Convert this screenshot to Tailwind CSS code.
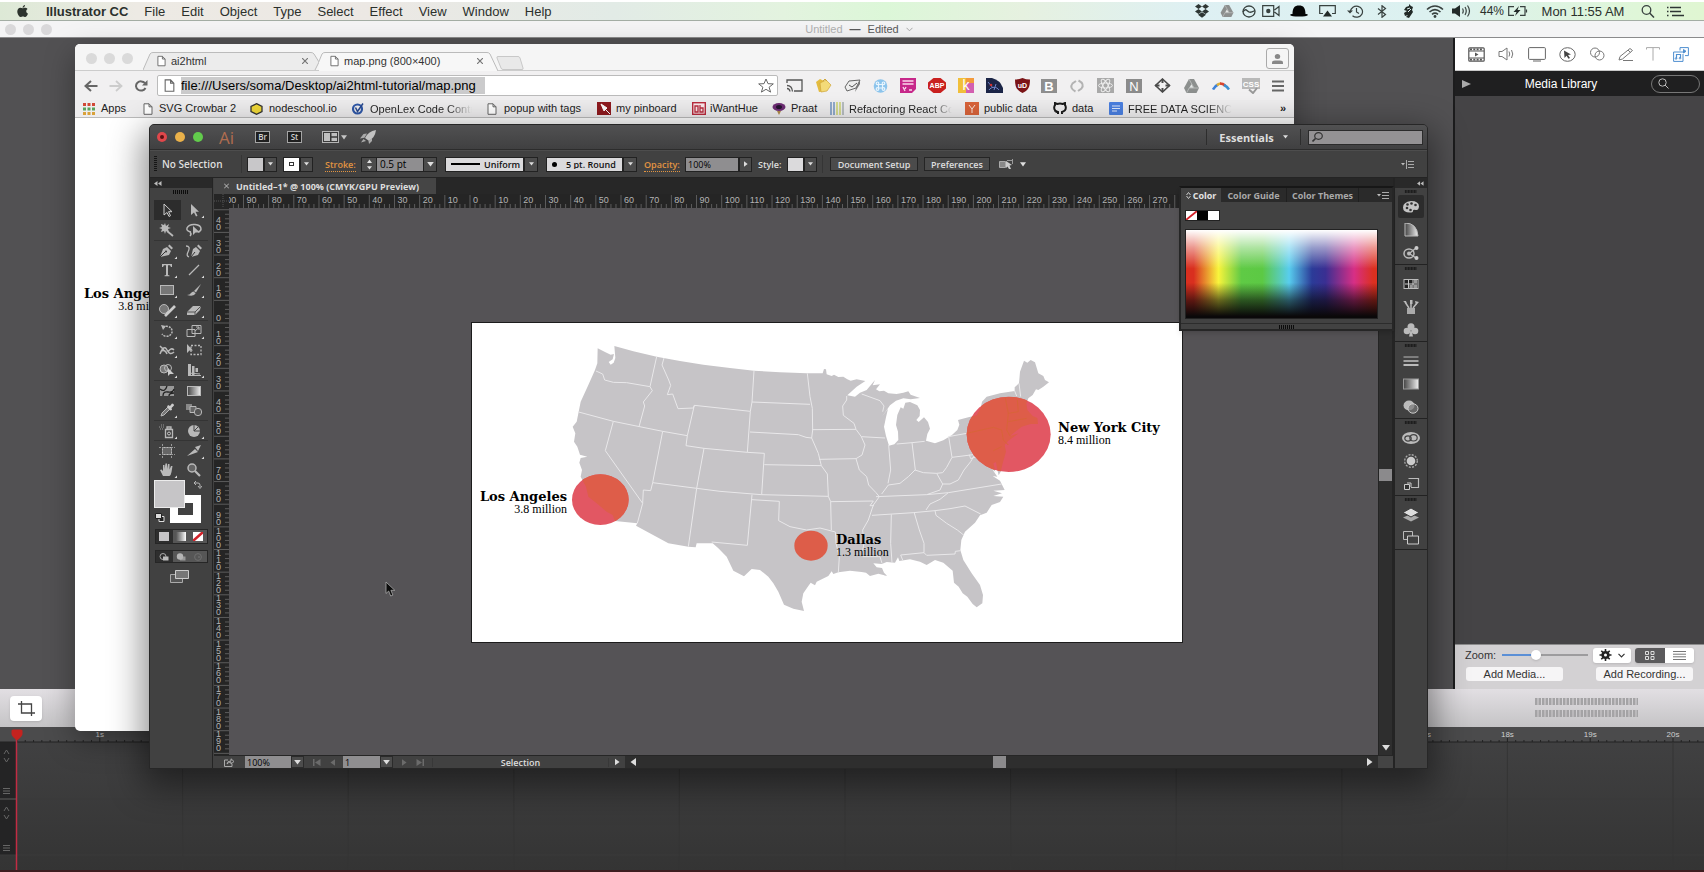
<!DOCTYPE html>
<html lang="en">
<head>
<meta charset="utf-8">
<title>Illustrator CC</title>
<script src="https://cdn.jsdelivr.net/npm/@tailwindcss/browser@4"></script>
</head>
<body class="font-['Liberation_Sans',Arial,sans-serif] bg-[#3e3e3e]">

<!-- shared symbols -->
<svg class="hidden" aria-hidden="true">
  <symbol id="down" viewBox="0 0 8 6"><path d="M0 0h8L4 5.5z" fill="currentColor"/></symbol>
  <symbol id="right" viewBox="0 0 6 8"><path d="M0 0v8l5.5-4z" fill="currentColor"/></symbol>
  <symbol id="left" viewBox="0 0 6 8"><path d="M6 0v8L.5 4z" fill="currentColor"/></symbol>
  <symbol id="page" viewBox="0 0 10 12"><path d="M1 .8h5l3 3v7.5H1zM6 .8v3h3" fill="#fff" stroke="#666" stroke-width="1"/></symbol>
  <symbol id="grip" viewBox="0 0 18 4"><path d="M1.500 0v4M3.500 0v4M5.500 0v4M7.500 0v4M9.500 0v4M11.500 0v4M13.500 0v4M15.500 0v4" stroke="#0c0c0c"/></symbol>
  <symbol id="collapse" viewBox="0 0 8 5"><path d="M3.500 0v5L0 2.500zM7.500 0v5L4 2.500z" fill="#bbb"/></symbol>
  <symbol id="drive" viewBox="0 0 16 14"><path d="M5.500 0h5l5 9-2.500 5H3L.5 9z" fill="#8c8f8e"/><path d="M8 5l2.300 4H5.700z" fill="#e3e6e5"/><path d="M5.500 0l5 9M15.500 9H5.700L3 14" stroke="#b5b8b7" fill="none"/></symbol>
</svg>

<div class="relative h-screen min-h-[600px] overflow-hidden flex flex-col">

  <!-- system menu bar -->
  <header class="h-[21px] shrink-0 pt-[2px] bg-white">
    <div class="h-[19px] flex items-center border-b border-[#a3ada4] text-[13px] leading-none text-[#2b302c] bg-[linear-gradient(90deg,#dde9d6_0%,#edeae4_8%,#ece8e4_22%,#e2ebe6_36%,#e3f3df_46%,#dcf7d8_52%,#e6f1e0_60%,#def0f3_70%,#dcf1f0_84%,#dff6d8_96%,#e0f6d2_100%)]">
      <nav class="flex flex-1 items-center gap-[16px] pl-[16px]" aria-label="Application menu">
        <button aria-label="Apple menu" class="w-[14px]"><svg class="w-[13px] h-[12px]" viewBox="0 0 13 12"><path d="M9 0c.1 1.300-1 2.600-2.400 2.700C6.500 1.400 7.700.2 9 0zM6.700 3.300c.6 0 1.300-.6 2.400-.6 1 0 1.900.4 2.500 1.200-2 1.200-1.700 3.700.4 4.500C11.300 10.400 10.300 12 9.200 12c-.9 0-1.200-.5-2.300-.5s-1.500.5-2.300.5C3 12 1.300 9 1.300 6.600c0-2.500 1.500-3.800 3-3.800 1 0 1.800.5 2.400.5z" fill="#2c332d"/></svg></button>
        <button class="font-bold">Illustrator CC</button>
        <button>File</button><button>Edit</button><button>Object</button><button>Type</button><button>Select</button><button>Effect</button><button>View</button><button>Window</button><button>Help</button>
      </nav>
      <div class="flex items-center h-full pr-[12px]">
        <span class="w-[26px] flex justify-center"><svg class="w-[16px] h-[14px]" viewBox="0 0 16 14"><path d="M4.500 0L8 2.500 4.500 5 1 2.500zM11.500 0L15 2.500 11.500 5 8 2.500zM4.500 5L8 7.500 4.500 10 1 7.500zM11.500 5L15 7.500 11.500 10 8 7.500zM4 10.800L8 8.300l4 2.500-4 3z" fill="#2e3634"/></svg></span>
        <span class="w-[23px] flex justify-center"><svg class="w-[14px] h-[12px]"><use href="#drive"/></svg></span>
        <span class="w-[21px] flex justify-center"><svg class="w-[14px] h-[13px]" viewBox="0 0 14 13"><ellipse cx="7" cy="6.500" rx="6" ry="5.500" fill="none" stroke="#38413f" stroke-width="1.300"/><path d="M1 7c2.500-4.500 4-1 6 0s4-.5 6-1.500" fill="none" stroke="#38413f" stroke-width="1.300"/></svg></span>
        <span class="w-[24px] flex justify-center"><svg class="w-[18px] h-[12px]" viewBox="0 0 18 12"><path d="M.7.7h11v10.600H.7zM12.500 5l4.500-3.500v9L12.500 7" fill="none" stroke="#38413f" stroke-width="1.200"/><circle cx="6.300" cy="6" r="2.200" fill="#38413f"/></svg></span>
        <span class="w-[31px] flex justify-center"><svg class="w-[18px] h-[12px]" viewBox="0 0 18 12"><path d="M2.500 9C2.500 3 4.500.5 9 .5S15.500 3 15.500 9c1.300 0 2.200.3 2.500 1-1 1-4 1.500-9 1.500S1 11 0 10c.5-.7 1.200-1 2.500-1z" fill="#050707"/></svg></span>
        <span class="w-[27px] flex justify-center"><svg class="w-[17px] h-[12px]" viewBox="0 0 17 12"><path d="M4 8.500H.700V.7h15.600v7.800H13" fill="none" stroke="#38413f" stroke-width="1.200"/><path d="M8.500 5.500L13 11.500H4z" fill="#222a28"/></svg></span>
        <span class="w-[29px] flex justify-center"><svg class="w-[17px] h-[13px]" viewBox="0 0 17 13"><path d="M3.500 6.500A6 5.500 0 1 1 5.500 10.800M9.500 3v4l2.500 1.500" fill="none" stroke="#38413f" stroke-width="1.200"/><path d="M0 5.500h6L3 8.500z" fill="#38413f"/></svg></span>
        <span class="w-[23px] flex justify-center"><svg class="w-[10px] h-[13px]" viewBox="0 0 10 13"><path d="M1 3.500l7.500 6L5 12.300V.7l3.500 2.800L1 9.500" fill="none" stroke="#38413f" stroke-width="1.200"/></svg></span>
        <span class="w-[30px] flex justify-center"><svg class="w-[11px] h-[14px]" viewBox="0 0 11 14"><path d="M6 0l2 2 2 1-1 3 1 2-2 3-2 3-3-1 2-2-3 1-1-3 3-2-3-1 2-3 3-1z" fill="#222a28"/><path d="M5 8l3-3M4 5l3-1" stroke="#dbeceb"/></svg></span>
        <span class="w-[23px] flex justify-center"><svg class="w-[18px] h-[13px]" viewBox="0 0 18 13"><path d="M1 4.500c5-4.500 11-4.500 16 0M3.500 7c3.500-3 7.500-3 11 0M6 9.300c2-1.600 4-1.600 6 0" fill="none" stroke="#38413f" stroke-width="1.600"/><circle cx="9" cy="11.500" r="1.400" fill="#38413f"/></svg></span>
        <span class="w-[31px] flex justify-center"><svg class="w-[19px] h-[12px]" viewBox="0 0 19 12"><path d="M0 3.500h3L8 0v12L3 8.500H0z" fill="#222a28"/><path d="M10.500 3.500q1.500 2.500 0 5M13 2q2.500 4 0 8M15.500.5q4 5.500 0 11" fill="none" stroke="#38413f" stroke-width="1.200"/></svg></span>
        <span class="w-[30px] text-center text-xs leading-none">44%</span>
        <span class="w-[22px] flex justify-center"><svg class="w-[20px] h-[10px]" viewBox="0 0 20 10"><path d="M6 .7H.700v8.600H6M12 .7h5v8.600h-5M18.500 3.500v3" fill="none" stroke="#38413f" stroke-width="1.200"/><path d="M11 0L5.500 6h3L7 10l5.500-6h-3z" fill="#222a28"/></svg></span>
        <time class="w-[108px] text-center">Mon 11:55 AM</time>
        <button aria-label="Spotlight" class="w-[22px] flex justify-center"><svg class="w-[14px] h-[13px]" viewBox="0 0 14 13"><circle cx="5.500" cy="5" r="4.300" fill="none" stroke="#38413f" stroke-width="1.300"/><path d="M8.600 8l4.400 4.500" stroke="#38413f" stroke-width="1.500"/></svg></button>
        <button aria-label="Notifications" class="w-[33px] flex justify-center"><svg class="w-[17px] h-[11px]" viewBox="0 0 17 11"><path d="M0 1.500h1.500M0 5.500h1.500M0 9.500h1.500M3 1.500h11M3 5.500h11M5 9.500h12" stroke="#2e3634" stroke-width="1.500"/></svg></button>
      </div>
    </div>
  </header>

  <!-- recorder window title -->
  <div class="h-[17px] shrink-0 flex items-center bg-[#f4f4f5] border-b border-[#8b8b8c] text-[11px] leading-none">
    <div class="flex gap-[7px] pl-[5px]"><i class="w-[11px] h-[11px] rounded-full bg-[#d9d8da]"></i><i class="w-[11px] h-[11px] rounded-full bg-[#d9d8da]"></i><i class="w-[11px] h-[11px] rounded-full bg-[#d9d8da]"></i></div>
    <div class="flex-1 flex justify-center items-center gap-[7px] pr-[38px] text-[#5a5a5b]"><span class="text-[#b0b0b1]">Untitled</span><span class="font-bold">—</span><span>Edited</span><svg class="w-[7px] h-[5px]" viewBox="0 0 7 5"><path d="M.5.8l3 3 3-3" fill="none" stroke="#aaa"/></svg></div>
  </div>

  <!-- recorder main area -->
  <div class="flex-1 min-h-0 flex">
    <div class="flex-1 bg-[#525153] border-r-2 border-[#1c1c1d]"></div>
    <aside class="w-[249px] shrink-0 flex flex-col bg-[#454446]">
      <div class="h-[33px] shrink-0 bg-white border-b border-[#c8c8c8] flex items-center justify-between pl-[13px] pr-[15px] text-[#6e6e6e]">
        <button aria-label="Video"><svg class="w-[17px] h-[15px]" viewBox="0 0 17 15" fill="none" stroke="#555" stroke-width="1.200"><rect x=".8" y=".8" width="15.400" height="13.400" rx="1"/><path d="M1 4h15M1 11h15"/><path d="M2 2.400h13M2 12.600h13" stroke-width="1.800" stroke-dasharray="2 1.300"/><path d="M7 5.500v4l3.500-2z" fill="#555" stroke="none"/></svg></button>
        <button aria-label="Audio"><svg class="w-[18px] h-[14px]" viewBox="0 0 18 14" fill="none" stroke="#777"><path d="M1 4.500h3L9 1v12L4 9.500H1zM11 4.500q1.500 2.500 0 5M13.500 3q2.500 4 0 8"/></svg></button>
        <button aria-label="Screen"><svg class="w-[18px] h-[15px]" viewBox="0 0 18 15" fill="none" stroke="#666"><rect x=".6" y=".6" width="16.800" height="11.800" rx="1"/><path d="M5 14h8"/></svg></button>
        <button aria-label="Callout"><svg class="w-[17px] h-[15px]" viewBox="0 0 17 15"><ellipse cx="8.500" cy="7.500" rx="7.700" ry="6.800" fill="none" stroke="#666"/><path d="M5 3.500l7 4-3 .5 2 3-1.500.8-2-3L5.500 11z" fill="#444"/></svg></button>
        <button aria-label="Touch"><svg class="w-[16px] h-[14px]" viewBox="0 0 16 14" fill="none" stroke="#777"><ellipse cx="6" cy="5.500" rx="4.500" ry="4.500"/><ellipse cx="10.500" cy="8.500" rx="4.500" ry="4.500"/></svg></button>
        <button aria-label="Annotate"><svg class="w-[16px] h-[15px]" viewBox="0 0 16 15" fill="none" stroke="#777"><path d="M2 9.500L12 1.500l2.500 2-10 8.500L1 13zM5 13.500h10M10 3l2.500 2.500"/></svg></button>
        <button aria-label="Text"><svg class="w-[14px] h-[14px]" viewBox="0 0 14 14" fill="none" stroke="#aaa"><path d="M.5 2.500V.6h13v1.900M7 .6v13"/></svg></button>
        <button aria-label="Media"><svg class="w-[16px] h-[15px]" viewBox="0 0 16 15" fill="none" stroke="#4f8fd0"><path d="M7 3.500V.6h8.400v8H12M11 5H.6v9.400H10V7"/><path d="M10.500 2.500v3.500l2.500-1.700z" fill="#4f8fd0"/><path d="M3.500 11.500v-4h4v3.500" stroke-width="1.200"/><circle cx="3" cy="11.500" r=".8"/><circle cx="7" cy="11.200" r=".8"/></svg></button>
      </div>
      <div class="h-[25px] shrink-0 bg-[#1f1f20] flex items-center pl-[7px] pr-1 text-white">
        <button aria-label="Play" class="text-[#aaa]"><svg class="w-[9px] h-[8px]" viewBox="0 0 9 8"><path d="M0 0v8l9-4z" fill="currentColor"/></svg></button>
        <h2 class="flex-1 text-center text-[12px]">Media Library</h2>
        <label class="w-[49px] h-[18px] border border-[#777] rounded-full flex items-center pl-[6px]"><svg class="w-[11px] h-[11px] shrink-0" viewBox="0 0 11 11"><circle cx="4.500" cy="4.500" r="3.700" fill="none" stroke="#bbb"/><path d="M7 7l3.500 3.500" stroke="#bbb"/></svg><input aria-label="Search media" class="w-6 min-w-0 outline-none bg-transparent"></label>
      </div>
      <div class="flex-1"></div>
      <div class="h-[45px] shrink-0 bg-[#d3d1d3] border-t border-[#8c8c8c] px-[10px] pt-[2px] text-[11px] leading-none text-[#333]">
        <div class="flex items-center h-[16px]">
          <label for="zoom" class="w-[37px]">Zoom:</label>
          <div class="relative flex items-center w-[86px] h-4">
            <input id="zoom" type="range" min="0" max="100" value="38" class="absolute inset-0 w-full opacity-0">
            <div class="w-[33px] h-[2px] bg-[#5b8fd6]"></div><div class="flex-1 h-[2px] bg-[#9d9c9e]"></div>
            <i class="absolute left-[29px] top-[3px] w-[10px] h-[10px] rounded-full bg-white shadow"></i>
          </div>
          <button aria-label="Settings" class="ml-[5px] w-[38px] h-[15px] bg-white rounded-[3px] shadow-sm flex items-center justify-center gap-[6px]"><svg class="w-[13px] h-[12px]" viewBox="0 0 12 12"><circle cx="6" cy="6" r="2.800" fill="none" stroke="#222" stroke-width="2.600"/><path d="M6 0v2.500M6 9.500V12M0 6h2.500M9.500 6H12M1.800 1.800l1.700 1.700M8.500 8.500l1.700 1.700M10.200 1.800L8.500 3.500M3.500 8.500l-1.700 1.700" stroke="#222" stroke-width="1.600"/></svg><svg class="w-[7px] h-[5px]" viewBox="0 0 7 5"><path d="M.5.8l3 3 3-3" fill="none" stroke="#333" stroke-width="1.200"/></svg></button>
          <div class="ml-[4px] flex h-[15px] rounded-[3px] overflow-hidden shadow-sm">
            <button aria-label="Grid view" class="w-[30px] bg-[#5b5a5c] flex items-center justify-center"><svg class="w-[10px] h-[9px]" viewBox="0 0 10 9" fill="none" stroke="#ddd"><path d="M.5.500h3v3h-3zM6 .5h3v3H6zM.5 5.500h3v3h-3zM6 5.500h3v3H6z"/></svg></button>
            <button aria-label="List view" class="w-[29px] bg-white flex items-center justify-center"><svg class="w-[13px] h-[9px]" viewBox="0 0 13 9" stroke="#777"><path d="M0 .5h13M0 3.200h13M0 5.800h13M0 8.500h13"/></svg></button>
          </div>
        </div>
        <div class="flex justify-between mt-[4px] px-px">
          <button class="w-[97px] h-[14px] bg-[#f6f5f6] rounded-[3px]">Add Media...</button>
          <button class="w-[97px] h-[14px] bg-[#f6f5f6] rounded-[3px]">Add Recording...</button>
        </div>
      </div>
    </aside>
  </div>

  <!-- transport bar -->
  <div class="h-[38px] shrink-0 bg-linear-to-b from-[#e2dfe3] to-[#c5c4c6] flex items-center justify-between pl-[10px] pr-[66px]">
    <button aria-label="Crop" class="w-[32px] h-[25px] bg-white rounded-[4px] shadow flex items-center justify-center"><svg class="w-[17px] h-[15px]" viewBox="0 0 17 15" fill="none" stroke="#444" stroke-width="1.300"><path d="M3.500 0v12H17M0 3h13.500v12"/></svg></button>
    <svg class="w-[103px] h-[20px]" viewBox="0 0 103 20" stroke="#a4a3a5"><path d="M0 3.500h103M0 15.500h103" stroke-width="7" stroke-dasharray="2.500 1"/></svg>
  </div>

  <!-- timeline -->
  <div class="h-[145px] shrink-0 bg-linear-to-b from-[#424243] to-[#343434] relative border-b-2 border-[#3c1e20]">
    <svg id="timeline" class="absolute inset-0 w-full h-full" font-family="Liberation Sans" font-size="8" fill="#cfcfcf">
      <rect width="100%" height="15" fill="#4b4b4c"/><rect y="15" width="16" height="113" fill="#242425"/>
      <path d="M0 15h2400" stroke="#232323"/><path d="M0 72h2400M0 128h2400" stroke="#3a3a3a"/><path d="M0 72h16" stroke="#555"/>
      <g fill="none" stroke="#666"><path d="M4 27l2.500-4 2.500 4M4 31l2.500 4 2.500-4M3 61.500h7M3 64h7M3 66.500h7M4 84l2.500-4 2.500 4M4 88l2.500 4 2.500-4M3 118.500h7M3 121h7M3 123.500h7"/></g>
    </svg>
  </div>

  <!-- browser window -->
  <section aria-label="Browser" class="absolute left-[75px] right-[410px] top-[44px] bottom-[141px] rounded-[5px] bg-white shadow-[0_10px_30px_rgba(0,0,0,0.35)] overflow-hidden flex flex-col text-[11px] leading-none text-[#333]">
    <div class="h-[27px] shrink-0 bg-[#f5f5f5] flex pl-[11px] pr-[5px] border-b border-[#ccc]">
      <div class="flex gap-[7px] pt-[9px] w-[57px]"><i class="w-[11px] h-[11px] rounded-full bg-[#dadada]"></i><i class="w-[11px] h-[11px] rounded-full bg-[#dadada]"></i><i class="w-[11px] h-[11px] rounded-full bg-[#dadada]"></i></div>
      <div class="relative w-[176px] mt-[8px] h-[18px]">
        <svg class="absolute inset-0 w-full h-full" viewBox="0 0 176 18" preserveAspectRatio="none"><path d="M0 18L7 2Q8 .5 10 .5H168Q170 .5 171 2L176 10 172 18" fill="#ececec" stroke="#bbb"/></svg>
        <div class="relative flex items-center h-full pl-[14px] pr-[11px]"><svg class="w-[9px] h-[12px]"><use href="#page"/></svg><span class="pl-[5px] flex-1">ai2html</span><button aria-label="Close tab"><svg class="w-[6px] h-[6px]" viewBox="0 0 6 6"><path d="M0 0l6 6M6 0L0 6" stroke="#777" stroke-width="1.200"/></svg></button></div>
      </div>
      <div class="relative w-[179px] mt-[8px] h-[19px]">
        <svg class="absolute inset-0 w-full h-full" viewBox="0 0 179 19" preserveAspectRatio="none"><path d="M-4 19L3 2Q4 .5 6 .5H168Q170 .5 171 2L179 19" fill="#f7f7f7" stroke="#bbb"/></svg>
        <div class="relative flex items-center h-[18px] pl-[11px] pr-[15px]"><svg class="w-[9px] h-[12px]"><use href="#page"/></svg><span class="pl-[5px] flex-1 whitespace-nowrap">map.png (800×400)</span><button aria-label="Close tab"><svg class="w-[6px] h-[6px]" viewBox="0 0 6 6"><path d="M0 0l6 6M6 0L0 6" stroke="#777" stroke-width="1.200"/></svg></button></div>
      </div>
      <button aria-label="New tab" class="-ml-[2px] mt-[12px] h-[14px] w-[28px]"><svg class="w-[28px] h-[14px]" viewBox="0 0 28 14"><path d="M2 .5h20q1.500 0 2 1.500l3 10q.5 1.500-1 1.500H7q-1.500 0-2-1.500L1 2Q.5.500 2 .5z" fill="#e9e9e9" stroke="#c8c8c8"/></svg></button>
      <button aria-label="Profile" class="ml-auto mt-[4px] w-[23px] h-[21px] border border-[#aaa] rounded-[3px] flex items-center justify-center"><svg class="w-[11px] h-[10px]" viewBox="0 0 11 10" fill="#888"><ellipse cx="5.500" cy="2.500" rx="2.700" ry="2.500"/><path d="M0 10V8.500Q0 6.500 3 6.500h5q3 0 3 2V10z"/></svg></button>
    </div>
    <div class="h-[29px] shrink-0 bg-[#f1f0f1] flex items-center pl-[9px] pr-[10px]">
      <div class="flex gap-[11px] w-[73px]">
        <button aria-label="Back"><svg class="w-[14px] h-[12px]" viewBox="0 0 14 12"><path d="M13.500 6H2M7 1L1.500 6 7 11" fill="none" stroke="#666" stroke-width="2"/></svg></button>
        <button aria-label="Forward"><svg class="w-[14px] h-[12px]" viewBox="0 0 14 12"><path d="M.5 6H12M7 1l5.500 5L7 11" fill="none" stroke="#ccc" stroke-width="1.800"/></svg></button>
        <button aria-label="Reload"><svg class="w-[14px] h-[12px]" viewBox="0 0 14 12"><path d="M11 3.200A5 4.600 0 1 0 11.500 8" fill="none" stroke="#666" stroke-width="2"/><path d="M13.500 0v5.500H8z" fill="#666"/></svg></button>
      </div>
      <div class="flex-1 h-[21px] bg-white border border-[#bbb] rounded-[2px] flex items-center pl-[6px] pr-[3px] text-[13px] text-black">
        <svg class="w-[11px] h-[13px]"><use href="#page"/></svg>
        <label class="sr-only" for="url">Address</label>
        <div class="flex-1 pl-[6px] flex"><input id="url" value="file:///Users/soma/Desktop/ai2html-tutorial/map.png" class="w-[304px] h-[17px] outline-none bg-[#cbcbcc]"></div>
        <button aria-label="Bookmark"><svg class="w-[16px] h-[15px]" viewBox="0 0 16 15"><path d="M8 1l2 4.700 5.300.2-4.200 3.300 1.500 4.900L8 11.300l-4.600 2.800 1.500-4.900L.7 5.900 6 5.700z" fill="#fff" stroke="#666"/></svg></button>
      </div>
      <div class="flex justify-between items-center w-[506px] pl-[8px] shrink-0">
        <svg class="w-[17px] h-[13px]" viewBox="0 0 17 13" fill="none" stroke="#555" stroke-width="1.300"><path d="M1 4V1h15v11H8M1 6.500q5 0 5.500 6M1 9.500q2.500 0 3 3"/></svg>
        <svg class="w-[17px] h-[15px]" viewBox="0 0 17 15"><path d="M1 4l4-3 4 2 1 10-6 1z" fill="#e3bb3f"/><path d="M5 5l6-3 5 5-4 6-6 1z" fill="#f3da78" stroke="#cfa63c" stroke-width=".7"/><path d="M8 3l2-2 2 2" fill="none" stroke="#cfa63c"/></svg>
        <svg class="w-[17px] h-[14px]" viewBox="0 0 17 14"><path d="M1 8L5 2l11-1-4 8-9 3z" fill="#eee" stroke="#666"/><path d="M5 6l3 2 5-4" fill="none" stroke="#555"/><path d="M12 9l-1 4 5-8V1z" fill="#777"/></svg>
        <svg class="w-[15px] h-[14px]" viewBox="0 0 15 14"><circle cx="7.500" cy="7" r="6.800" fill="#8cc4ec"/><g fill="none" stroke="#e9f5fd" stroke-width="1.200"><path d="M5.500 5.500h4v3.500h-4z"/><circle cx="4.500" cy="4.300" r="1.300"/><circle cx="10.500" cy="4.300" r="1.300"/><circle cx="4.500" cy="10" r="1.300"/><circle cx="10.500" cy="10" r="1.300"/></g></svg>
        <svg class="w-[16px] h-[15px]" viewBox="0 0 16 15"><path d="M0 0h16v11l-4 4H0z" fill="#c7288a"/><path d="M2.500 3h11M2.500 6h11M3 9l2 4M6 9l-1 2M9 12h3" stroke="#fbd9ec" stroke-width="1.300"/></svg>
        <svg class="w-[18px] h-[15px]" viewBox="0 0 18 15"><path d="M5.500 0h7L18 4.500v6L12.500 15h-7L0 10.500v-6z" fill="#c9201f"/><text x="9" y="10" font-size="7" font-weight="bold" font-family="Liberation Sans" text-anchor="middle" fill="#fff">ABP</text></svg>
        <svg class="w-[16px] h-[15px]" viewBox="0 0 16 15"><path d="M0 0h8v15H0z" fill="#f1bf3a"/><path d="M8 0h8v15H8z" fill="#d35fb0"/><path d="M8 0h8v5H8z" fill="#f39a3c"/><text x="8" y="12" font-size="14" font-family="Liberation Sans" text-anchor="middle" fill="#fff">k</text></svg>
        <svg class="w-[17px] h-[15px]" viewBox="0 0 17 15"><path d="M0 0h6q8 2 11 10v5H0z" fill="#1c2547"/><path d="M3 12a6 6 0 0 1 10 0M2 4l5 6M8 12l2-6" stroke="#7183c9" fill="none"/><circle cx="5" cy="7" r="1.300" fill="#c33"/></svg>
        <svg class="w-[15px] h-[15px]" viewBox="0 0 15 15"><path d="M0 1.500q4 0 7.500-1.500 3.500 1.500 7.500 1.500c0 8-2 11-7.500 13.500C2 12.500 0 9.500 0 1.500z" fill="#7b1417"/><text x="7.500" y="9.500" font-size="7" font-weight="bold" font-family="Liberation Sans" text-anchor="middle" fill="#fff">uD</text></svg>
        <svg class="w-[16px] h-[14px]" viewBox="0 0 16 14"><rect width="16" height="14" fill="#8f8f8f"/><text x="8" y="11.500" font-size="13" font-weight="bold" font-family="Liberation Sans" text-anchor="middle" fill="#fff">B</text></svg>
        <svg class="w-[16px] h-[14px]" viewBox="0 0 16 14" fill="none" stroke="#b3b3b3" stroke-width="2"><path d="M6.500 12.500Q0 9 3.500 4.500L7 2M9.500 1.500q6.500 3.500 3 8L9 12"/></svg>
        <svg class="w-[17px] h-[15px]" viewBox="0 0 17 15"><rect width="17" height="15" fill="#a9a9a9"/><g fill="none" stroke="#eee"><ellipse cx="8.500" cy="7.500" rx="7" ry="2.500"/><ellipse cx="8.500" cy="7.500" rx="7" ry="2.500" transform="rotate(60 8.500 7.500)"/><ellipse cx="8.500" cy="7.500" rx="7" ry="2.500" transform="rotate(120 8.500 7.500)"/></g></svg>
        <svg class="w-[16px] h-[14px]" viewBox="0 0 16 14"><rect width="16" height="14" fill="#8b8b8b"/><text x="8" y="11.500" font-size="13" font-family="Liberation Sans" text-anchor="middle" fill="#fff">N</text></svg>
        <svg class="w-[17px] h-[15px]" viewBox="0 0 17 15" fill="none" stroke="#4a4a4a" stroke-width="1.600"><path d="M8.500 1l7 6.500-7 6.500-7-6.500z"/><path d="M8.500 1v4M8.500 10v4M1.500 7.500h4M11.500 7.500h4" stroke-width="2"/></svg>
        <svg class="w-[17px] h-[14px]"><use href="#drive"/></svg>
        <svg class="w-[18px] h-[8px]" viewBox="0 0 18 8" fill="none" stroke-width="2.600"><path d="M1 7.500Q3 4 6 2.500" stroke="#3f82d8"/><path d="M5 3.200Q7 1.500 9 1.500" stroke="#e3b035"/><path d="M8 1.500q3 0 5 2" stroke="#d8442f"/><path d="M12 3q3 1.500 5 4.500" stroke="#3a8fd0"/></svg>
        <svg class="w-[18px] h-[16px]" viewBox="0 0 18 16"><rect width="18" height="11" fill="#b8b8b8"/><text x="9" y="8.500" font-size="8" font-weight="bold" font-family="Liberation Sans" text-anchor="middle" fill="#fff">CSS</text><path d="M7 11.500l4 3.500 4-5" fill="none" stroke="#999" stroke-width="2"/></svg>
        <button aria-label="Menu"><svg class="w-[12px] h-[12px]" viewBox="0 0 12 12"><path d="M0 1.500h12M0 6h12M0 10.500h12" stroke="#666" stroke-width="2.200"/></svg></button>
      </div>
    </div>
    <nav aria-label="Bookmarks" class="h-[18px] shrink-0 bg-[#eeedee] border-b border-[#bbb] flex items-center pl-[8px] pr-[8px] whitespace-nowrap text-[#222]">
      <a href="#" class="flex items-center gap-[6px] w-[60px] shrink-0"><svg class="w-[12px] h-[12px]" viewBox="0 0 12 12" stroke-width="3" stroke-dasharray="3 1.500"><path d="M0 1.500h12" stroke="#d14836"/><path d="M0 6h12" stroke="#57a35c"/><path d="M0 10.500h12" stroke="#d9a13a"/></svg>Apps</a>
      <a href="#" class="flex items-center gap-[6px] w-[107px] shrink-0"><svg class="w-[10px] h-[12px]"><use href="#page"/></svg>SVG Crowbar 2</a>
      <a href="#" class="flex items-center gap-[6px] w-[101px] shrink-0"><svg class="w-[13px] h-[12px]" viewBox="0 0 13 12"><path d="M6.500.7l5.500 2.800v5l-5.500 2.800L1 8.500v-5z" fill="#f0d838" stroke="#333" stroke-width="1.300"/></svg>nodeschool.io</a>
      <a href="#" class="flex items-center gap-[6px] w-[136px] shrink-0"><svg class="w-[13px] h-[12px]" viewBox="0 0 13 12"><circle cx="6.500" cy="6" r="4.500" fill="none" stroke="#2f58a8" stroke-width="2.200"/><path d="M4.500 4.500l2 4 5.500-8" stroke="#26488e" fill="none" stroke-width="1.500"/></svg><span class="w-[102px] overflow-hidden bg-linear-to-r from-[#222] from-75% to-[#eee] bg-clip-text text-transparent leading-[14px]">OpenLex Code Contr</span></a>
      <a href="#" class="flex items-center gap-[7px] w-[110px] shrink-0"><svg class="w-[10px] h-[12px]"><use href="#page"/></svg>popup with tags</a>
      <a href="#" class="flex items-center gap-[5px] w-[95px] shrink-0"><svg class="w-[14px] h-[13px]" viewBox="0 0 14 13"><rect width="14" height="13" fill="#8e1a1f"/><path d="M4 2l6 4-3 3zM8 7l5 5" stroke="#fff" fill="#fff"/></svg>my pinboard</a>
      <a href="#" class="flex items-center gap-[4px] w-[80px] shrink-0"><svg class="w-[14px] h-[13px]" viewBox="0 0 14 13"><rect x=".7" y=".7" width="12.600" height="11.600" fill="#fbe9ec" stroke="#b92b3d" stroke-width="1.400"/><path d="M3 4h3v6H3zM8 3v7h3V6H8" fill="none" stroke="#b92b3d" stroke-width="1.300"/></svg>iWantHue</a>
      <a href="#" class="flex items-center gap-[5px] w-[58px] shrink-0"><svg class="w-[14px] h-[13px]" viewBox="0 0 14 13"><ellipse cx="7" cy="5" rx="6.500" ry="4" fill="#6d2c74"/><ellipse cx="7" cy="5" rx="3" ry="2" fill="#251330"/><path d="M5 9l2 4 2-4" fill="#b08a4a"/></svg>Praat</a>
      <a href="#" class="flex items-center gap-[4px] w-[135px] shrink-0"><svg class="w-[15px] h-[13px]" viewBox="0 0 15 13" stroke-width="1.300"><path d="M1 0v13M4 0v13" stroke="#5f86b8"/><path d="M7 0v13M10 0v13" stroke="#c6cf5c"/><path d="M13 0v13" stroke="#9aa3a8"/></svg><span class="w-[103px] overflow-hidden bg-linear-to-r from-[#222] from-80% to-[#eee] bg-clip-text text-transparent leading-[14px]">Refactoring React Co</span></a>
      <a href="#" class="flex items-center gap-[5px] w-[88px] shrink-0"><svg class="w-[14px] h-[13px]" viewBox="0 0 14 13"><rect width="14" height="13" fill="#d9633a"/><path d="M4 3l3 4 3-4M7 7v4" stroke="#fbe6dd" fill="none"/></svg>public data</a>
      <a href="#" class="flex items-center gap-[5px] w-[56px] shrink-0"><svg class="w-[14px] h-[13px]" viewBox="0 0 14 13"><path d="M5 12v-2Q1 9 1.200 5.500 1.300 4 2 3.200V1l2 1q3-1 6 0l2-1v2.200q.8.900.8 2.300Q13 9 9 10v2" fill="none" stroke="#191919" stroke-width="2"/><path d="M1.500 9.500L5 11" stroke="#191919"/></svg>data</a>
      <a href="#" class="flex items-center gap-[5px] shrink-0"><svg class="w-[14px] h-[13px]" viewBox="0 0 14 13"><rect width="14" height="13" rx="1" fill="#4a7fe0"/><path d="M3 4h8M3 6.500h8M3 9h5" stroke="#dfe9fb" stroke-width="1.200"/></svg><span class="w-[104px] overflow-hidden bg-linear-to-r from-[#222] from-75% to-[#eee] bg-clip-text text-transparent leading-[14px]">FREE DATA SCIENCE</span></a>
      <button aria-label="More bookmarks" class="ml-auto font-bold">»</button>
    </nav>
    <div class="flex-1 pt-[169px]">
      <div class="w-[96px] text-right text-black whitespace-nowrap">
        <p class="font-['DejaVu_Serif',serif] font-bold text-[13px] leading-[13px]">Los Angeles</p>
        <p class="font-['Liberation_Serif',serif] text-[12px] leading-[12px]">3.8 million</p>
      </div>
    </div>
  </section>

  <!-- Illustrator window -->
  <section aria-label="Illustrator" class="absolute left-[149px] right-[276px] top-[124px] bottom-[103px] rounded-t-[5px] bg-[#414141] border border-[#272727] shadow-[0_12px_34px_6px_rgba(0,0,0,0.45)] flex flex-col font-['Open_Sans',sans-serif] font-semibold text-[9px] leading-none text-[#dedede]">
    <div class="h-[25px] shrink-0 rounded-t-[4px] bg-linear-to-b from-[#515152] to-[#404041] border-b border-[#2c2c2c] flex items-center pl-[7px] pr-[4px]">
      <div class="flex gap-[8px] w-[62px]">
        <button aria-label="Close" class="w-[10px] h-[10px] rounded-full bg-[#e0474b] flex items-center justify-center"><i class="w-[4px] h-[4px] rounded-full bg-[#5a1013]"></i></button>
        <button aria-label="Minimize" class="w-[10px] h-[10px] rounded-full bg-[#eab14a]"></button>
        <button aria-label="Zoom window" class="w-[10px] h-[10px] rounded-full bg-[#62cb4c]"></button>
      </div>
      <span class="w-[36px] font-normal text-[17px] text-[#b06d50]">Ai</span>
      <button class="w-[15px] h-[12px] border border-[#a5a5a5] bg-[#1f1f1f] text-[8px] text-[#cfcfcf]">Br</button>
      <button class="ml-[17px] w-[15px] h-[12px] border border-[#a5a5a5] bg-[#1f1f1f] text-[8px] text-[#cfcfcf]">St</button>
      <button aria-label="Arrange documents" class="ml-[20px] flex items-center gap-[2px] text-[#c5c5c5]"><svg class="w-[17px] h-[12px]" viewBox="0 0 17 12"><rect x=".5" y=".5" width="16" height="11" fill="#3a3a3a" stroke="#b5b5b5"/><path d="M2 2h6v8H2zM9.500 2H15v3.300H9.500zM9.500 6.700H15V10H9.500z" fill="#c0c0c0"/></svg><svg class="w-[6px] h-[5px]"><use href="#down"/></svg></button>
      <button aria-label="GPU performance" class="ml-[13px]"><svg class="w-[17px] h-[14px]" viewBox="0 0 17 14" fill="#c2c2c2"><path d="M16 0Q8 1.500 5 8l4 3q6-3.500 7-11z"/><path d="M7 3.500L3.500 4 0 8.500l4.500-.8zM12 8v3l-3 3-.5-2.800zM3.500 9L1 12.500 6 11z" fill="#aaa"/></svg></button>
      <div class="ml-auto flex items-center h-full">
        <i class="w-px h-[16px] bg-[#2d2d2d]"></i>
        <button class="w-[93px] flex items-center justify-center gap-[9px] text-[11px] font-bold">Essentials<svg class="w-[5px] h-[4px]"><use href="#down"/></svg></button>
        <i class="w-px h-[16px] bg-[#2d2d2d]"></i>
        <label class="ml-[7px] w-[115px] h-[15px] bg-[#949294] border border-[#2b2b2b] flex items-center pl-[3px]"><svg class="w-[11px] h-[10px] shrink-0" viewBox="0 0 11 10" fill="none" stroke="#333"><ellipse cx="6.500" cy="4" rx="3.800" ry="3.400" stroke-width="1.200"/><path d="M3.500 6.500L.5 9.500" stroke-width="1.600"/></svg><input aria-label="Search help" class="w-[90px] outline-none"></label>
      </div>
    </div>

    <!-- control bar -->
    <div class="h-[28px] shrink-0 border-t border-[#4d4d4d] border-b border-b-[#242424] flex items-center pl-[4px] pr-[13px] whitespace-nowrap">
      <svg class="w-[3px] h-[16px]" viewBox="0 0 3 16"><path d="M1.500 0v16" stroke="#161616" stroke-width="3" stroke-dasharray="1 1"/></svg>
      <span class="pl-[5px] w-[84px] text-[10px]">No Selection</span>
      <i class="w-px h-[18px] bg-[#353535]"></i>
      <button aria-label="Fill" class="ml-[5px] w-[17px] h-[15px] bg-[#c8c7c9] border border-[#222]"></button><button aria-label="Fill options" class="w-[13px] h-[15px] border border-[#222] bg-[#4c4c4c] flex items-center justify-center"><svg class="w-[5px] h-[4px]"><use href="#down"/></svg></button>
      <button aria-label="Stroke color" class="ml-[6px] w-[17px] h-[15px] bg-white border border-[#222] flex items-center justify-center"><i class="w-[5px] h-[4px] border border-[#333]"></i></button><button aria-label="Stroke options" class="w-[13px] h-[15px] border border-[#222] bg-[#4c4c4c] flex items-center justify-center"><svg class="w-[5px] h-[4px]"><use href="#down"/></svg></button>
      <label for="sw" class="ml-[12px] w-[36px] text-[#e29441]"><span class="border-b border-dotted border-[#e29441]">Stroke:</span></label>
      <button aria-label="Step stroke" class="w-[16px] h-[15px] border border-[#222] bg-[#4c4c4c] flex flex-col items-center justify-center gap-[3px]"><svg class="w-[5px] h-[4px] rotate-180"><use href="#down"/></svg><svg class="w-[5px] h-[4px]"><use href="#down"/></svg></button>
      <input id="sw" value="0.5 pt" class="w-[46px] h-[15px] bg-[#8f8e90] border-y border-[#222] text-black text-[10px] font-normal pl-[3px]"><button aria-label="Stroke presets" class="w-[14px] h-[15px] border border-[#222] bg-[#4c4c4c] flex items-center justify-center"><svg class="w-[7px] h-[5px]"><use href="#down"/></svg></button>
      <div class="ml-[8px] relative w-[79px] h-[15px]"><select aria-label="Width profile" class="appearance-none w-full h-full bg-[#dbdadc] text-[#111] border border-[#222] pl-[38px]"><option>Uniform</option></select><i class="absolute left-[6px] top-[6px] w-[29px] h-[2px] bg-black"></i></div><button aria-label="Width profiles" class="w-[14px] h-[15px] border border-[#222] bg-[#4c4c4c] flex items-center justify-center"><svg class="w-[5px] h-[4px]"><use href="#down"/></svg></button>
      <div class="ml-[8px] relative w-[77px] h-[15px]"><select aria-label="Brush" class="appearance-none w-full h-full bg-[#dbdadc] text-[#111] border border-[#222] pl-[19px]"><option>5 pt. Round</option></select><i class="absolute left-[6px] top-[5px] w-[5px] h-[5px] rounded-full bg-black"></i></div><button aria-label="Brushes" class="w-[14px] h-[15px] border border-[#222] bg-[#4c4c4c] flex items-center justify-center"><svg class="w-[5px] h-[4px]"><use href="#down"/></svg></button>
      <label for="op" class="ml-[7px] w-[41px] text-[#e29441]"><span class="border-b border-dotted border-[#e29441]">Opacity:</span></label>
      <input id="op" value="100%" class="w-[54px] h-[15px] bg-[#8f8e90] border border-[#222] text-black font-normal pl-[2px]"><button aria-label="Opacity slider" class="w-[13px] h-[15px] border border-[#222] bg-[#4c4c4c] flex items-center justify-center"><svg class="w-[4px] h-[6px]"><use href="#right"/></svg></button>
      <span class="ml-[6px] w-[29px]">Style:</span>
      <button aria-label="Graphic style" class="w-[17px] h-[15px] bg-[#dbdadc] border border-[#222]"></button><button aria-label="Graphic styles" class="w-[13px] h-[15px] border border-[#222] bg-[#4c4c4c] flex items-center justify-center"><svg class="w-[5px] h-[4px]"><use href="#down"/></svg></button>
      <i class="ml-[5px] w-px h-[18px] bg-[#353535]"></i>
      <button class="ml-[7px] w-[88px] h-[14px] border border-[#252525] bg-[#4b4b4b]">Document Setup</button>
      <button class="ml-[6px] w-[66px] h-[14px] border border-[#252525] bg-[#4b4b4b]">Preferences</button>
      <button aria-label="Align" class="ml-[9px] flex items-center gap-[6px]"><svg class="w-[15px] h-[11px]" viewBox="0 0 15 11"><path d="M.5 2.500h6v6h-6z" fill="#888" stroke="#aaa"/><path d="M7 2l6 4-2.500.5 1.500 3.500H10L8.500 7.500 7 9z" fill="#ccc"/><path d="M8 1.500h5M13.500 0v5" stroke="#999"/></svg><svg class="w-[6px] h-[5px]"><use href="#down"/></svg></button>
      <button aria-label="Panel menu" class="ml-auto"><svg class="w-[13px] h-[9px]" viewBox="0 0 13 9"><path d="M0 3h4L2 5.500z" fill="#bbb"/><path d="M5.500 0v9M7 1.500h6M7 4.500h6M7 7.500h6" stroke="#aaa"/></svg></button>
    </div>

    <div class="flex-1 min-h-0 flex">
      <!-- toolbox -->
      <div class="w-[63px] shrink-0 flex flex-col items-center border-r border-[#242424]">
        <div class="self-stretch h-[10px] bg-[#292929] flex items-center pl-[4px]"><svg class="w-[8px] h-[5px]"><use href="#collapse"/></svg></div>
        <svg class="mt-[2px] w-[18px] h-[4px] shrink-0"><use href="#grip"/></svg>
        <div id="tools" class="mt-[6px] grid grid-cols-2 w-[54px] text-[#b9b9b9]"></div>
        <div class="relative w-[54px] h-[45px]">
          <button aria-label="Stroke" class="absolute left-[16px] top-[15px] w-[31px] h-[28px] border-8 border-white"></button>
          <button aria-label="Fill" class="absolute left-0 top-0 w-[31px] h-[28px] bg-[#c6c5c7] border border-[#ececec]"></button>
          <svg class="absolute left-[39px] top-[1px] w-[9px] h-[8px]" viewBox="0 0 9 8" fill="none" stroke="#b5b5b5"><path d="M2 2h3q2 0 2 2v2M3 0L1 2l2 2M5 5l2 2.500L9 5"/></svg>
          <svg class="absolute left-[1px] top-[33px] w-[10px] h-[9px]" viewBox="0 0 10 9"><path d="M4 3.500h5v5H4z" fill="#222" stroke="#ddd"/><path d="M.5.500h6v5h-6z" fill="#ddd" stroke="#222"/></svg>
        </div>
        <div class="mt-[4px] w-[53px] h-[15px] border border-[#262626] flex">
          <button aria-label="Color" class="flex-1 bg-[#2e2e2e] flex items-center justify-center"><i class="w-[10px] h-[9px] bg-[#c6c5c7]"></i></button>
          <button aria-label="Gradient" class="flex-1 bg-[#565656] flex items-center justify-center"><i class="w-[10px] h-[9px] bg-linear-to-r from-[#555] to-white"></i></button>
          <button aria-label="None" class="flex-1 bg-[#565656] flex items-center justify-center"><svg class="w-[10px] h-[9px] bg-white" viewBox="0 0 10 9"><path d="M0 9L10 0" stroke="#d3222a" stroke-width="2.500"/></svg></button>
        </div>
        <div class="mt-[6px] w-[53px] h-[13px] border border-[#262626] flex">
          <button aria-label="Draw normal" class="flex-1 bg-[#2e2e2e] flex items-center justify-center"><svg class="w-[10px] h-[8px]" viewBox="0 0 10 8"><circle cx="4" cy="3.500" r="3" fill="none" stroke="#aaa"/><path d="M4 3.500h5.500v4H4z" fill="#bbb"/></svg></button>
          <button aria-label="Draw behind" class="flex-1 bg-[#565656] flex items-center justify-center"><svg class="w-[10px] h-[8px]" viewBox="0 0 10 8"><path d="M4 3.500h5.500v4H4z" fill="#999"/><circle cx="4" cy="3.500" r="3.200" fill="#b5b5b5"/></svg></button>
          <button aria-label="Draw inside" class="flex-1 bg-[#565656] flex items-center justify-center"><svg class="w-[10px] h-[8px]" viewBox="0 0 10 8"><circle cx="5" cy="4" r="3.400" fill="none" stroke="#6f6f6f"/><path d="M5 4h2" stroke="#777"/></svg></button>
        </div>
        <button aria-label="Screen mode" class="mt-[7px] mr-[4px]"><svg class="w-[19px] h-[13px]" viewBox="0 0 19 13"><path d="M.5 4.500h12v8H.5z" fill="#555" stroke="#aaa"/><path d="M5.500.500h13v8h-13z" fill="#777" stroke="#ccc"/></svg></button>
      </div>

      <!-- document -->
      <div class="flex-1 min-w-0 flex flex-col ml-px">
        <div class="h-[16px] shrink-0 bg-[#272727] flex">
          <div class="w-[222px] bg-[#454545] flex items-center gap-[7px] pl-[10px] whitespace-nowrap"><button aria-label="Close document"><svg class="w-[5px] h-[6px]" viewBox="0 0 5 6"><path d="M0 .5l5 5M5 .5l-5 5" stroke="#bbb"/></svg></button><span class="font-bold">Untitled–1* @ 100% (CMYK/GPU Preview)</span></div>
        </div>
        <svg id="hruler" class="h-[14px] w-full shrink-0 bg-[#252525]" font-family="Liberation Sans" font-weight="400" font-size="9" fill="#b4b4b4"></svg>
        <div class="flex-1 min-h-0 flex">
          <svg id="vruler" class="w-[15px] h-full shrink-0 bg-[#252525]" font-family="Liberation Sans" font-weight="400" font-size="9" fill="#b4b4b4" text-anchor="middle"></svg>
          <div class="flex-1 relative overflow-hidden bg-[#555356]">
            <svg class="absolute left-[242px] top-[114px] w-[712px] h-[321px] bg-white border border-[#1c1c1c]" viewBox="-264 -21 2130 957">
              <defs>
                <path id="land" d="M113 55L135 66 152 74 162 72 158 88 146 96 152 104 161 98 166 84 163 48 220 64 290 80 360 93 430 104 510 114 582 122 660 127 740 130 788 130 792 117 798 118 800 133 815 138 822 134 835 141 850 140 862 148 872 152 890 148 916 153 890 170 862 196 885 200 900 188 920 180 945 150 938 166 960 163 948 178 958 184 972 182 985 190 1010 192 1030 188 1045 184 1052 194 1080 204 1052 208 1030 205 1008 212 990 226 976 246 966 260 984 236 978 262 972 290 978 318 987 347 1003 343 1015 330 1014 305 1008 285 1012 255 1022 232 1030 236 1036 218 1050 216 1072 226 1080 240 1079 258 1069 270 1076 276 1092 262 1104 276 1110 296 1102 312 1098 332 1125 340 1150 331 1175 316 1192 300 1198 284 1194 270 1225 262 1250 256 1262 235 1266 215 1280 200 1320 190 1364 183 1364 172 1377 160 1380 125 1392 92 1402 98 1412 90 1425 97 1435 130 1450 138 1455 150 1467 157 1450 170 1435 180 1428 178 1418 195 1405 205 1399 220 1402 240 1418 258 1432 264 1434 282 1412 282 1385 290 1350 318 1376 310 1345 332 1334 345 1338 365 1328 400 1322 425 1316 436 1312 420 1308 396 1300 400 1306 425 1296 416 1312 440 1298 438 1320 452 1334 480 1300 482 1326 490 1300 498 1330 500 1320 516 1295 525 1280 548 1260 556 1245 578 1215 605 1204 630 1201 660 1210 690 1235 730 1260 765 1269 795 1267 820 1250 832 1238 822 1222 800 1208 790 1196 770 1182 758 1178 722 1150 698 1125 690 1100 705 1080 695 1050 688 1018 693 1014 682 1005 698 980 696 965 702 940 700 950 712 966 714 972 728 982 738 955 731 930 738 918 728 905 726 870 722 835 727 820 732 815 724 805 738 770 755 765 766 752 758 745 768 730 790 725 815 732 843 700 836 672 824 655 785 640 760 625 740 600 720 575 717 552 739 520 722 500 680 475 655 458 640 410 640 407 652 385 650 325 640 228 587 232 580 165 573 158 555 140 545 110 520 85 500 78 470 62 440 66 420 58 398 62 384 82 380 60 374 52 350 42 335 46 310 38 290 50 275 62 215 85 165 105 120 112 100z"/>
                <clipPath id="bubbles"><ellipse cx="121" cy="509" rx="85" ry="76"/><ellipse cx="1346" cy="313" rx="126" ry="113"/></clipPath>
                <path id="borders" d="M108 123L128 132 134 150 160 157 200 158 270 170M290 80L270 170 277 182 250 216 254 228 237 290M56 246L160 274 308 304 382 317M160 274L136 362 248 520 232 580M308 304L278 458 272 482 250 480 248 520M278 458L410 475 480 484 604 494 805 499M382 317L378 347 432 355 562 367 613 370 605 494M312 84L306 105 326 150 332 166 322 194 338 192 354 236 400 234 403 226 571 244M403 226L382 317M582 122L576 216 571 244 562 367M576 216L750 223M570 306L715 314 738 322 755 324M613 404L784 407 802 432 805 499 812 515 814 600M432 355L410 475 385 650M576 494L562 646 455 636M576 509L658 514 656 572 690 590 740 600 780 594 826 606M742 130L750 200 757 235 758 300 755 324 775 370 784 407M757 299L888 298 904 320 975 324M777 388L888 386 906 375 915 345 904 320M888 298L882 280 850 256 848 228 860 210 860 198M905 192L960 212 972 228 968 245M888 386L898 420 920 440 926 465 948 488 958 500 940 525 925 570 908 600 912 640 906 670M812 515L940 513 930 527 942 527M826 606L828 640 838 680 835 727M908 680L960 680 966 700M948 500L1100 494 1165 488 1325 462M936 556L1060 548 1125 542 1170 536 1215 528 1262 552M994 553L992 640 996 698M1062 546L1078 600 1092 640 1092 668 1022 675 1028 690M1092 668L1100 676 1185 672 1186 664 1202 662M1125 542L1128 556 1160 580 1192 600 1212 616M1098 540L1110 522 1140 508 1165 488M1100 494L1140 480 1148 462 1130 430 1090 428 1065 420 1045 440 1020 460 985 465 965 492M986 345L992 420 984 460M1056 338L1066 420M1010 342L1056 338 1094 334M1166 320L1176 382 1160 412 1148 428 1130 430M1176 382L1240 374 1302 362M1148 462L1170 462 1195 450 1212 420 1232 395 1242 378M1228 374L1232 386 1250 380M1364 183L1370 198M1377 160L1382 200M1165 320L1220 310"/>
              </defs>
              <use href="#land" fill="#c6c4c7"/>
              <use href="#borders" fill="none" stroke="#e9e8ea" stroke-width="3"/>
              <g fill="#e25763"><ellipse cx="121" cy="509" rx="85" ry="76"/><ellipse cx="1346" cy="313" rx="126" ry="113"/></g>
              <g clip-path="url(#bubbles)"><use href="#land" fill="#de5d49"/><path d="M1336 204L1345 250 1340 300 1350 318M1345 250L1375 245 1372 210M1345 275L1400 265M1220 310L1300 292 1325 300 1330 330 1345 345M1300 362L1325 350" fill="none" stroke="#d8643a" stroke-width="3"/></g>
              <ellipse cx="753" cy="647" rx="50" ry="45" fill="#dd5d49"/>
            </svg>
            <div class="absolute left-[230px] w-[108px] top-[282px] text-right text-black"><p class="font-['DejaVu_Serif',serif] font-bold text-[13px] leading-[13px]">Los Angeles</p><p class="font-['Liberation_Serif',serif] font-normal text-[12px] leading-[12px]">3.8 million</p></div>
            <div class="absolute left-[607px] top-[325px] text-black"><p class="font-['DejaVu_Serif',serif] font-bold text-[13px] leading-[13px]">Dallas</p><p class="font-['Liberation_Serif',serif] font-normal text-[12px] leading-[12px]">1.3 million</p></div>
            <div class="absolute left-[829px] top-[213px] text-black"><p class="font-['DejaVu_Serif',serif] font-bold text-[13px] leading-[13px]">New York City</p><p class="font-['Liberation_Serif',serif] font-normal text-[12px] leading-[12px]">8.4 million</p></div>
            <svg class="absolute left-[156px] top-[373px] w-[11px] h-[16px]" viewBox="0 0 11 16"><path d="M1 1v11.500l2.700-2.500 2 5 2.200-.9-2-4.800H9.800z" fill="#0c0c0c" stroke="#aaa" stroke-width=".8"/></svg>
          </div>
          <div class="w-[15px] shrink-0 bg-[#2e2e2e] border-x border-[#242424] relative"><i class="absolute inset-x-0 top-[261px] h-[12px] bg-[#8b8a8c]"></i><svg class="absolute left-[3px] bottom-[4px] w-[8px] h-[6px] text-[#ddd]"><use href="#down"/></svg></div>
        </div>
        <!-- status bar -->
        <div class="h-[13px] shrink-0 border-t border-[#262626] flex items-center text-[#ddd]">
          <button aria-label="Share" class="w-[31px] flex justify-center"><svg class="w-[11px] h-[9px]" viewBox="0 0 11 9" fill="none" stroke="#aaa"><path d="M4 2H.5v6.500H8V6M3 6Q3 3 7 3V.8L10 3.500 7 6V4Q4.500 4 3 6"/></svg></button>
          <input aria-label="Zoom level" value="100%" class="w-[46px] h-[12px] bg-[#8f8e90] text-black font-normal pl-[2px]"><button aria-label="Zoom levels" class="w-[13px] h-[12px] flex items-center justify-center bg-[#4c4c4c] border border-[#2b2b2b]"><svg class="w-[7px] h-[5px]"><use href="#down"/></svg></button>
          <div class="w-[39px] flex justify-center gap-[9px] text-[#6b6b6b]"><svg class="w-[8px] h-[7px]" viewBox="0 0 8 7"><path d="M0 0h1.500v7H0zM7.500 0v7L2 3.500z" fill="currentColor"/></svg><svg class="w-[5px] h-[7px]"><use href="#left"/></svg></div>
          <input aria-label="Artboard" value="1" class="w-[37px] h-[12px] bg-[#8f8e90] text-black font-normal pl-[2px]"><button aria-label="Artboards" class="w-[13px] h-[12px] flex items-center justify-center bg-[#4c4c4c] border border-[#2b2b2b]"><svg class="w-[7px] h-[5px]"><use href="#down"/></svg></button>
          <div class="w-[39px] flex justify-center gap-[9px] text-[#6b6b6b]"><svg class="w-[5px] h-[7px]"><use href="#right"/></svg><svg class="w-[8px] h-[7px]" viewBox="0 0 8 7"><path d="M6.500 0H8v7H6.500zM.5 0v7L6 3.500z" fill="currentColor"/></svg></div>
          <span class="w-[177px] text-center border-x border-[#383838]">Selection</span>
          <button aria-label="Status options" class="w-[16px] flex justify-center"><svg class="w-[5px] h-[8px]"><use href="#right"/></svg></button>
          <div class="flex-1 h-full bg-[#2e2e2e] relative flex items-center justify-between px-[5px]"><svg class="w-[6px] h-[8px]"><use href="#left"/></svg><i class="absolute left-[368px] inset-y-0 w-[13px] bg-[#8b8a8c]"></i><svg class="w-[6px] h-[8px]"><use href="#right"/></svg></div>
          <i class="w-[15px] h-full bg-[#444]"></i>
        </div>
      </div>

      <!-- panel dock -->
      <div class="w-[34px] shrink-0 border-l-2 border-[#242424] flex flex-col">
        <div class="h-[10px] shrink-0 bg-[#292929] flex items-center justify-end pr-[3px]"><svg class="w-[7px] h-[5px]"><use href="#collapse"/></svg></div>
        <div id="dock"></div>
      </div>
    </div>

    <!-- floating color panel -->
    <div class="absolute right-[33px] top-[61px] w-[215px] h-[145px] bg-[#424242] border-2 border-t-[#171717] border-[#262626] flex flex-col shadow-md">
      <div class="h-[14px] shrink-0 bg-[#2a2a2a] flex items-center text-[#a9a9a9]">
        <button class="h-full w-[40px] flex items-center justify-center gap-[2px] bg-[#424242] text-[#e4e4e4] font-bold"><svg class="w-[5px] h-[7px]" viewBox="0 0 5 7" fill="none" stroke="#ccc"><path d="M.5 3l2-2.500L4.500 3M.5 4l2 2.500L4.500 4"/></svg>Color</button>
        <button class="h-full w-[66px] border-r border-[#1f1f1f] font-bold">Color Guide</button>
        <button class="h-full w-[72px] border-r border-[#1f1f1f] font-bold">Color Themes</button>
        <button aria-label="Color panel menu" class="ml-auto pr-[3px]"><svg class="w-[12px] h-[7px]" viewBox="0 0 12 7"><path d="M0 2h4L2 4.500z" fill="#bbb"/><path d="M5 .5h7M5 3.500h7M5 6.500h7" stroke="#aaa"/></svg></button>
      </div>
      <div class="flex-1 px-[4px] pt-[8px]">
        <div class="flex w-[35px] h-[11px] border border-[#222] bg-white"><svg class="w-[11px] h-[9px]" viewBox="0 0 11 9"><path d="M0 9L11 0" stroke="#d3222a" stroke-width="1.800"/></svg><i class="w-[11px] bg-black"></i></div>
        <div class="mt-[8px] w-[193px] h-[90px] border border-[#222] bg-[linear-gradient(90deg,#d92f1f_4%,#f8f43c_17%,#5fca45_29%,#5cc944_40%,#58cdee_54%,#2b3b98_66%,#3a2f92_73%,#d72f86_88%,#dc3020_98%)]"><div class="w-full h-full bg-[linear-gradient(180deg,#fff_0%,rgba(255,255,255,0.5)_20%,rgba(255,255,255,0)_44%,rgba(0,0,0,0)_60%,rgba(8,6,8,0.6)_80%,#0a0809_98%)]"></div></div>
      </div>
      <div class="h-[6px] shrink-0 border-t border-[#2c2c2c] flex justify-center items-center"><svg class="w-[18px] h-[4px]"><use href="#grip"/></svg></div>
    </div>
  </section>
</div>

<script>
const NS = 'http://www.w3.org/2000/svg';
const add = (parent, tag, attrs, text) => {
  const el = document.createElementNS(NS, tag);
  for (const k in attrs) el.setAttribute(k, attrs[k]);
  if (text !== undefined) el.textContent = text;
  parent.appendChild(el);
};

// horizontal ruler: zero at 256px, ten units per 25.17px
const hr = document.getElementById('hruler');
for (let n = -10; n <= 28; n++) {
  const x = 256 + n * 25.17;
  let d = `M${x} 1v13`;
  for (let i = 1; i < 5; i++) d += `M${x + i * 5.03} 10v4`;
  add(hr, 'path', {d, stroke: '#5c5c5c'});
  if (n < 28) add(hr, 'text', {x: x + 3, y: 9}, Math.abs(n * 10));
}
add(hr, 'rect', {width: 15, height: 14, fill: '#252525'});
add(hr, 'path', {d: 'M9 0v14M0 7h15', stroke: '#555', 'stroke-dasharray': '1 1'});

// vertical ruler: digits stacked above each major tick
const vr = document.getElementById('vruler');
for (let n = -5; n <= 19; n++) {
  const end = 115 + n * 22.65;
  let d = `M0 ${end}h15`;
  for (let i = 1; i < 5; i++) d += `M11 ${end + i * 4.53}h4`;
  add(vr, 'path', {d, stroke: '#5c5c5c'});
  if (n > -5) String(Math.abs(n * 10)).split('').reverse().forEach((c, i) =>
    add(vr, 'text', {x: 4.5, y: end - 2 - i * 7}, c));
}

// timeline seconds
const tl = document.getElementById('timeline');
for (let s = 0; s <= 20; s++) {
  const x = 17 + s * 82.8;
  let d = '';
  for (let i = 1; i < 10; i++) d += `M${x + i * 8.28} 13v2`;
  add(tl, 'path', {d: d + `M${x} 11v4`, stroke: '#222'});
  if (s) add(tl, 'text', {x, y: 10, 'text-anchor': 'middle'}, s + 's');
  if (s && s % 2 === 0) add(tl, 'path', {d: `M${x} 15v130`, stroke: '#353535'});
}
add(tl, 'path', {d: 'M16.500 12v135', stroke: '#c22c44', 'stroke-width': 1.5});
add(tl, 'path', {d: 'M11.500 4q0-1.500 1.500-1.500h8q1.500 0 1.500 1.500v3q0 2-5.500 6.500-5.500-4.500-5.500-6.500z', fill: '#c4231f'});

// toolbox: [label, drawing, has flyout, starts a group]
const tools = [
  ['Selection', '<path d="M5 1v11l3-2.500 2 4 1.500-.8-2-4H13z" fill="#333" stroke="#ccc"/>'],
  ['Direct selection', '<path d="M5 1v11l3-2.500 2 4 1.500-.8-2-4H13z" fill="#b9b9b9"/>', 1],
  ['Magic wand', '<path d="M6 0l1 3 3-2-1 3 3 1-3 1 1 3-3-1-1 3-1-3-3 1 1-3-3-1 3-1-1-3 3 1z" fill="#b9b9b9"/><path d="M8 8l6 5" stroke="#b9b9b9" stroke-width="1.800"/>'],
  ['Lasso', '<path d="M5 9Q0 8 1 5q2-4 8-3.500T15 6q0 2-3 3M4 9q2 2 0 4" fill="none" stroke="#b9b9b9" stroke-width="1.500"/><path d="M7 3v9l2.500-2.500H14z" fill="#b9b9b9"/>'],
  ['Pen', '<path d="M1 13L4 5l4-2 4 4-2 4zM9 2l1.500-1.500L14 4l-1.500 1.500z" fill="#b9b9b9"/><path d="M1 13l5-5" stroke="#333"/><circle cx="7" cy="7.500" r="1" fill="#333"/>', 1, 1],
  ['Curvature', '<path d="M5 13l2-8 3-2 4 4-2 4zM11 2l1.500-1.500L16 4l-1.500 1.500z" fill="#b9b9b9"/><path d="M5 13l4-5" stroke="#333"/><path d="M0 2q5 0 2 6-2 4 1 5" fill="none" stroke="#b9b9b9" stroke-width="1.300"/>', 0, 1],
  ['Type', '<path d="M3 1h10v3h-1l-1-1.800H9V12l1.500.5v.8h-5v-.8L7 12V2.200H5L4 4H3z" fill="#b9b9b9"/>', 1],
  ['Line', '<path d="M3 12L13 2" stroke="#b9b9b9" stroke-width="1.200"/>', 1],
  ['Rectangle', '<rect x="1.500" y="2.500" width="13" height="9" fill="#777" stroke="#b9b9b9"/>', 1],
  ['Paintbrush', '<path d="M15 1L8 8l2 1.500z" fill="#b9b9b9"/><path d="M7.500 8.500l2.200 1.700Q8 14 1 12q3 0 4-2 1-1.500 2.500-1.500z" fill="#b9b9b9"/>', 1],
  ['Shaper', '<circle cx="5" cy="6" r="4.500" fill="#777" stroke="#b9b9b9"/><path d="M16 3L8 11l-2 2" stroke="#ccc" stroke-width="2.600"/>', 1],
  ['Eraser', '<path d="M1 9l6-6h8l-1 4-5 5H1z" fill="#b9b9b9"/><path d="M1 9h8l6-6M9 9v3" fill="none" stroke="#555"/>', 1],
  ['Rotate', '<path d="M4 3.500A5.500 5 0 1 1 3 10" fill="none" stroke="#b9b9b9" stroke-width="1.500" stroke-dasharray="2 1"/><path d="M2 1l5 1-3 4z" fill="#b9b9b9"/>', 1, 1],
  ['Scale', '<path d="M6 1.500h9v8H6zM1 5.500h8v7H1z" fill="none" stroke="#b9b9b9"/><path d="M9 7l4-3.500M10 3h3v3" stroke="#b9b9b9" fill="none"/>', 1, 1],
  ['Width', '<path d="M1 11Q5 1 8 7t7 2M1 3l4 4M2 8q4-2 6 3M9 9q3-5 6-2" fill="none" stroke="#b9b9b9" stroke-width="1.500"/>', 1],
  ['Free transform', '<path d="M1 1v9l2.500-2.500H7z" fill="#b9b9b9"/><path d="M5 2.500h10v9H5z" fill="none" stroke="#b9b9b9" stroke-width="1.300" stroke-dasharray="2 1.500"/>'],
  ['Shape builder', '<circle cx="5" cy="6" r="4" fill="#777" stroke="#b9b9b9"/><circle cx="9" cy="5" r="3.500" fill="none" stroke="#b9b9b9"/><path d="M9 5v8l2-2h4z" fill="#ccc"/>', 1],
  ['Perspective', '<path d="M2 1h3v11H2zM6 3h2.500v9H6zM9.500 5H12v4H9.500z" fill="#b9b9b9"/><path d="M2 12.500h13M2 10l12 1" stroke="#b9b9b9"/>', 1],
  ['Mesh', '<rect x="1" y="2" width="14" height="10" fill="#999"/><path d="M1 5q5 4 7-3M4 12q0-5 5-4t6-3M10 12q0-3 5-3" fill="none" stroke="#222" stroke-width="1.300"/>', 0, 1],
  ['Gradient', '<rect x="1.500" y="2.500" width="13" height="9" fill="url(#tg)" stroke="#b9b9b9"/>', 0, 1],
  ['Eyedropper', '<path d="M2 13l1-3 6-6 2 2-6 6z" fill="#777" stroke="#b9b9b9"/><path d="M9 2l2 1 2-2.500q2 0 2 2L12.500 5l.5 2-2 .5L8 4z" fill="#ccc"/>', 1],
  ['Blend', '<path d="M0 1h6v6H0z" fill="#888"/><path d="M4 3.500h6v6H4z" fill="#666" stroke="#b9b9b9"/><circle cx="12" cy="9" r="3.700" fill="#555" stroke="#b9b9b9"/>'],
  ['Symbol sprayer', '<path d="M6.500 5.500h7v8h-7zM8 3h4v2H8z" fill="none" stroke="#b9b9b9" stroke-width="1.300"/><circle cx="10" cy="9.500" r="1.500" fill="none" stroke="#ccc"/><path d="M0 3h6M1 5h4M2 1h4" stroke="#999" stroke-dasharray="1 1"/>', 1, 1],
  ['Graph', '<circle cx="8" cy="7" r="6" fill="#b9b9b9"/><path d="M8 7V1M8 7h6M8 7l4-4" stroke="#444"/>', 1, 1],
  ['Artboard', '<rect x="3.500" y="3.500" width="9" height="7" fill="#666" stroke="#b9b9b9"/><path d="M3.500 0v14M12.500 0v14M0 3.500h16M0 10.500h16" stroke="#999" stroke-dasharray="2 1"/>', 0, 1],
  ['Slice', '<path d="M1 12l8-7 3 3zM9 3l6-2-3 6z" fill="#b9b9b9"/>', 1, 1],
  ['Hand', '<path d="M4 13L1 7l1.500-.5L4 8V2h1.500v4L6.500.500H8V6l1-5h1.500v5.500L12 3h1.500l-1 6q-.5 3-2 4z" fill="#b9b9b9"/>', 1],
  ['Zoom', '<circle cx="6" cy="5" r="4" fill="#666" stroke="#b9b9b9" stroke-width="1.500"/><path d="M9 8l5 5" stroke="#b9b9b9" stroke-width="2.200"/>'],
];
document.getElementById('tools').innerHTML = '<svg class="absolute w-0 h-0"><defs><linearGradient id="tg"><stop offset="0" stop-color="#444"/><stop offset="1" stop-color="#eee"/></linearGradient></defs></svg>' +
  tools.map(([name, art, fly, top], i) =>
  `<button aria-label="${name}" class="h-[20px] flex items-center justify-center ${top ? 'border-t border-[#343434]' : ''} ${i === 0 ? 'bg-[#2c2c2c]' : ''}"><svg class="w-[21px] h-[16px]" viewBox="-2 -1 21 16">${art}${fly ? '<path d="M18 12.500v2.500h-2.500z" fill="#ddd"/>' : ''}</svg></button>`).join('');

// dock icons grouped as panels
const dock = [
  [['Color', '<path d="M9 1q8 0 8 5.500-.5 4-3 3.500-3-1-3 1 0 1.500-3 1.500-7 0-7-5Q1 2 9 1z" fill="#c4c4c4"/><g fill="#333"><circle cx="5" cy="8" r="1.300"/><circle cx="5.500" cy="4.500" r="1.300"/><circle cx="9.500" cy="3.500" r="1.300"/><circle cx="13.500" cy="5" r="1.300"/><circle cx="8.500" cy="10" r="1.300"/></g>', 1],
   ['Color guide', '<path d="M3 0q12 0 13 13H3z" fill="url(#tg)" stroke="#bbb"/>'],
   ['Color themes', '<ellipse cx="7" cy="7.500" rx="5" ry="4.500" fill="none" stroke="#bbb" stroke-width="1.500"/><circle cx="7" cy="7.500" r="2" fill="#bbb"/><path d="M8 7l6-5M8 8l6 4" stroke="#bbb" stroke-width="1.300"/><circle cx="14.500" cy="2" r="2" fill="#ccc"/><circle cx="14.500" cy="12" r="2" fill="#ccc"/>']],
  [['Swatches', '<rect x="2" y="2.500" width="14" height="9" fill="#222" stroke="#bbb"/><path d="M3 7h12M6.500 3v8M11 3v8" stroke="#ccc"/><path d="M12 3h3v3h-3zM12 8h3v3h-3zM7.500 8h3v3h-3z" fill="#999"/>'],
   ['Brushes', '<path d="M5 8h8v6H5z" fill="#aaa"/><path d="M7 8L3 2M9 8V1M11 8l4-5" stroke="#bbb" stroke-width="1.500"/><path d="M8 0h2.500v4H8zM13 1l4 1-3 3zM1 1l3 0 1 3z" fill="#bbb"/>'],
   ['Symbols', '<circle cx="9" cy="3.800" r="3.500" fill="#bbb"/><circle cx="5" cy="8" r="3.300" fill="#bbb"/><circle cx="13" cy="8" r="3.300" fill="#bbb"/><path d="M9 5l2 8.500H7z" fill="#bbb"/>']],
  [['Stroke', '<path d="M1.500 3h15" stroke="#bbb"/><path d="M1.500 7h15" stroke="#bbb" stroke-width="1.600"/><path d="M1.500 11h15" stroke="#bbb" stroke-width="2"/>'],
   ['Gradient', '<rect x="1.500" y="2" width="15" height="10" fill="url(#tg)" stroke="#999"/>'],
   ['Transparency', '<ellipse cx="7" cy="5.500" rx="5.500" ry="5" fill="#bbb"/><ellipse cx="11" cy="8.500" rx="5" ry="4.700" fill="#777" fill-opacity=".7" stroke="#ccc"/>']],
  [['Libraries', '<ellipse cx="9" cy="7" rx="9" ry="6" fill="#bbb"/><ellipse cx="6" cy="7.500" rx="3.200" ry="2.600" fill="none" stroke="#444" stroke-width="1.200"/><ellipse cx="11.500" cy="6.800" rx="3.700" ry="3.200" fill="none" stroke="#444" stroke-width="1.200"/>'],
   ['Appearance', '<circle cx="9" cy="7" r="4.300" fill="#ccc"/><circle cx="9" cy="7" r="6.300" fill="none" stroke="#aaa" stroke-width="1.300" stroke-dasharray="2 1.300"/>'],
   ['Graphic styles', '<path d="M6.500 1.500h10v9H9" fill="none" stroke="#bbb" stroke-width="1.200"/><path d="M2.500 7.500h5v5h-5z" fill="#333" stroke="#ccc"/><path d="M5 6h4v4" fill="none" stroke="#ccc"/>']],
  [['Layers', '<path d="M9 6l8 3.500-8 4-8-4z" fill="#aaa"/><path d="M9 0l8 4.500-8 4.500-8-4.500z" fill="#ddd" stroke="#3c3c3c"/>'],
   ['Artboards', '<path d="M1.500.500h9v8h-9z" fill="none" stroke="#bbb"/><path d="M5.500 5h11v8h-11z" fill="#404040" stroke="#ccc"/>']],
];
document.getElementById('dock').innerHTML = dock.map(group =>
  '<div class="border-b border-[#222] flex flex-col items-center"><svg class="mt-[2px] mb-[2px] w-[18px] h-[3px]"><use href="#grip"/></svg>' +
  group.map(([name, art, on]) =>
    `<button aria-label="${name}" class="w-[26px] h-[23px] flex items-center justify-center ${on ? 'bg-[#2c2c2c] rounded-[2px]' : ''}"><svg class="w-[18px] h-[14px]" viewBox="0 0 18 14">${art}</svg></button>`).join('') + '</div>').join('');
</script>
</body>
</html>
